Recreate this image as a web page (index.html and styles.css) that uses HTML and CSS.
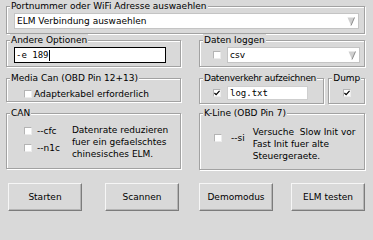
FILE: index.html
```html
<!DOCTYPE html>
<html lang="de">
<head>
  <meta charset="UTF-8" />
  <meta name="viewport" content="width=device-width, initial-scale=1" />
  <title>ELM Einstellungen</title>
  <link rel="stylesheet" href="styles.css">
</head>
<body>

<div class="window">

  <fieldset class="group group-port">
    <legend>Portnummer oder WiFi Adresse auswaehlen</legend>
    <div class="inner inner-port">
      <div class="combo">
        <span>ELM Verbindung auswaehlen</span>
        <svg class="arrow" width="8" height="9" viewBox="0 0 8 9"><polygon points="0.5,0.5 7.5,0.5 4,8.5" fill="#cfcfcf" /><line x1="7.5" y1="0.5" x2="4" y2="8.5" stroke="#8a8a8a" /></svg>
      </div>
    </div>
  </fieldset>

  <fieldset class="group group-opts">
    <legend>Andere Optionen</legend>
    <div class="inner inner-opts">
      <div class="entry entry-focus">-e 189<span class="caret"></span></div>
    </div>
  </fieldset>

  <fieldset class="group group-log">
    <legend>Daten loggen</legend>
    <div class="inner inner-log">
      <span class="check"></span>
      <div class="combo">
        <span>csv</span>
        <svg class="arrow" width="8" height="9" viewBox="0 0 8 9"><polygon points="0.5,0.5 7.5,0.5 4,8.5" fill="#cfcfcf" /><line x1="7.5" y1="0.5" x2="4" y2="8.5" stroke="#8a8a8a" /></svg>
      </div>
    </div>
  </fieldset>

  <fieldset class="group group-media">
    <legend>Media Can (OBD Pin 12+13)</legend>
    <div class="inner inner-media">
      <span class="check"></span>
      <span>Adapterkabel erforderlich</span>
    </div>
  </fieldset>

  <div class="traffic">
    <fieldset class="group group-traffic">
      <legend>Datenverkehr aufzeichnen</legend>
      <div class="inner inner-traffic">
        <span class="check checked"><svg width="7" height="6" viewBox="0 0 7 6"><polyline points="0.5,3 2.5,5 6.5,0.5" fill="none" stroke="#000" stroke-width="1.4" /></svg></span>
        <div class="entry entry-log">log.txt</div>
      </div>
    </fieldset>
    <fieldset class="group group-dump">
      <legend>Dump</legend>
      <div class="inner inner-dump">
        <span class="check checked"><svg width="7" height="6" viewBox="0 0 7 6"><polyline points="0.5,3 2.5,5 6.5,0.5" fill="none" stroke="#000" stroke-width="1.4" /></svg></span>
      </div>
    </fieldset>
  </div>

  <fieldset class="group group-can">
    <legend>CAN</legend>
    <div class="inner inner-can">
      <div class="flags">
        <div class="flag"><span class="check"></span><span>--cfc</span></div>
        <div class="flag"><span class="check"></span><span>--n1c</span></div>
      </div>
      <p class="note note-can">Datenrate reduzieren<br>fuer ein gefaelschtes<br>chinesisches ELM.</p>
    </div>
  </fieldset>

  <fieldset class="group group-kline">
    <legend>K-Line (OBD Pin 7)</legend>
    <div class="inner inner-kline">
      <div class="flag flag-si"><span class="check"></span><span>--si</span></div>
      <p class="note note-kline">Versuche&nbsp; Slow Init vor<br>Fast Init fuer alte<br>Steuergeraete.</p>
    </div>
  </fieldset>

  <div class="buttons buttons-left">
    <button type="button">Starten</button>
    <button type="button">Scannen</button>
  </div>
  <div class="buttons buttons-right">
    <button type="button">Demomodus</button>
    <button type="button">ELM testen</button>
  </div>

</div>

</body>
</html>
```

FILE: styles.css
```css
/* Grundlayout */
* {
  box-sizing: border-box;
}
body {
  margin: 0;
  background: #d9d9d9;
  font-family: 'DejaVu Sans', Verdana, sans-serif;
  font-size: 9px;
  line-height: 12px;
  color: #000;
}
.window {
  display: grid;
  grid-template-columns: 175px 166px;
  column-gap: 18px;
  align-items: start;
  padding-left: 6px;
}

/* Rahmen (groove) */
.group {
  margin: 0;
  padding: 0;
  min-width: 0;
  border: 1px solid #a2a2a2;
  box-shadow: inset 1px 1px 0 #fff, 1px 1px 0 #fff;
}
.group legend {
  margin-left: 3px;
  padding: 0 1px;
  line-height: 12px;
  white-space: nowrap;
  background: #d9d9d9;
}
.group-traffic legend {
  letter-spacing: -0.3px;
}
.inner {
  display: flex;
  align-items: center;
}

.group-port {
  grid-column: 1 / -1;
  width: 359px;
}
.inner-port {
  padding: 1px 5px 4px 7px;
}
.inner-opts {
  padding: 1px 0 3px 7px;
}
.inner-log {
  padding: 1px 4px 3px 13px;
}
.group-media,
.traffic {
  margin-top: 5px;
}
.inner-media {
  padding: 4px 0 1px 17px;
  gap: 2px;
}
.traffic {
  display: flex;
  gap: 4px;
}
.group-traffic {
  width: 126px;
}
.group-dump {
  width: 37px;
}
.inner-traffic {
  padding: 2px 0 3px 13px;
}
.inner-dump {
  justify-content: center;
  height: 19px;
  padding-bottom: 2px;
}
.group-can,
.group-kline {
  margin-top: 3px;
}
.inner-can {
  align-items: flex-start;
  padding: 5px 0 8px 17px;
}
.inner-kline {
  align-items: flex-start;
  padding: 7px 0 7px 14px;
}

/* Eingabefelder */
.combo {
  flex: 1;
  display: flex;
  align-items: center;
  justify-content: space-between;
  height: 16px;
  padding: 0 3px 0 2px;
  background: #fff;
  border: 1px solid #c4c4c4;
}
.inner-log .combo {
  margin-left: 6px;
}
.arrow {
  display: block;
}
.entry {
  display: flex;
  align-items: center;
  background: #fff;
  font-family: 'DejaVu Sans Mono', monospace;
  white-space: pre;
}
.entry-focus {
  width: 152px;
  height: 16px;
  padding-left: 1px;
  border: 1px solid #000;
}
.caret {
  width: 1px;
  height: 11px;
  background: #000;
}
.entry-log {
  width: 81px;
  height: 14px;
  margin-left: 6px;
  padding-left: 2px;
  border: 1px solid #cfcfcf;
}

/* Checkboxen */
.check {
  display: flex;
  align-items: center;
  justify-content: center;
  flex: none;
  width: 8px;
  height: 8px;
  background: #fff;
  border: 1px solid;
  border-color: #b4b4b4 #ececec #ececec #b4b4b4;
}
.check svg {
  display: block;
}
.flags {
  display: flex;
  flex-direction: column;
  gap: 5px;
  margin-top: 1px;
}
.flag {
  display: flex;
  align-items: center;
  gap: 5px;
  height: 12px;
}
.flag-si {
  margin-top: 6px;
  gap: 9px;
}
.note {
  margin: 0;
}
.note-can {
  margin-left: 12px;
}
.note-kline {
  margin-left: 8px;
}

/* Buttons */
.buttons {
  display: flex;
  justify-content: space-between;
  margin-top: 13px;
}
.buttons-left {
  padding: 0 2px;
}
.buttons button {
  width: 74px;
  height: 28px;
  padding: 0;
  font-family: inherit;
  font-size: 9px;
  color: #000;
  background: #d9d9d9;
  border: 1px solid;
  border-color: #f6f6f6 #7c7c7c #7c7c7c #f6f6f6;
  box-shadow: inset -1px -1px 0 #b5b5b5;
}
```
